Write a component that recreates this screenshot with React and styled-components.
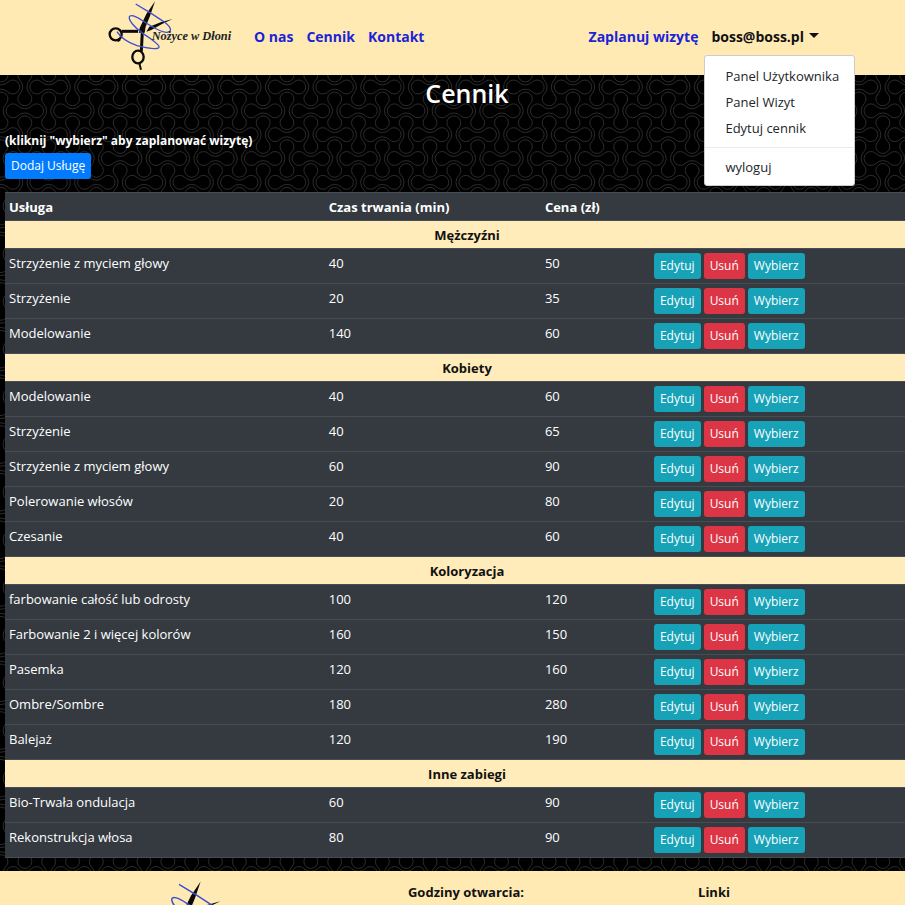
import React from "react";
import styled, { createGlobalStyle } from "styled-components";

const tile = `<svg xmlns='http://www.w3.org/2000/svg' xmlns:xlink='http://www.w3.org/1999/xlink' width='143' height='143' viewBox='0 0 144 144'><defs><path id='b' d='M-7,-5A10 10 0 0 0 7,-5A7 7 0 1 1 7,5A10 10 0 0 0 -7,5A7 7 0 1 1 -7,-5Z' fill='none' stroke='#2b2b2b' stroke-width='1'/></defs>${[0, 1, 2, 3, 4, 5, 6]
  .flatMap((i) =>
    [0, 1, 2, 3, 4, 5, 6].map(
      (j) =>
        `<use xlink:href='#b' transform='translate(${i * 24} ${j * 24})${(i + j) % 2 ? " rotate(90)" : ""}'/>`
    )
  )
  .join("")}</svg>`;
const pattern = `url("data:image/svg+xml,${encodeURIComponent(tile).replace(/'/g, "%27").replace(/\(/g, "%28").replace(/\)/g, "%29")}")`;

const cream = "#ffeab3";

const GlobalStyle = createGlobalStyle`
  * { box-sizing: border-box; }
  body {
    margin: 0;
    background: #000;
    color: #fff;
    font: 13px/20px "Open Sans", "Noto Sans", sans-serif;
  }
`;

const Page = styled.div`
  min-height: 100vh;
`;

const Header = styled.header`
  display: flex;
  align-items: center;
  height: 75px;
  padding: 0 86px 0 108px;
  background: ${cream};
  color: #111;
`;

const Brand = styled.a`
  display: block;
  margin-right: 21px;
  line-height: 0;
`;

const Nav = styled.nav`
  display: flex;
  flex: 1;
  gap: 13px;
  padding-bottom: 2px;
`;

const NavLink = styled.a`
  color: #1a24d8;
  font-size: 14px;
  font-weight: 700;
  text-decoration: none;
  white-space: nowrap;
  &:nth-child(4) { margin-left: auto; }
`;

const Dropdown = styled.div`
  position: relative;
`;

const Toggle = styled.button`
  display: flex;
  align-items: center;
  gap: 5px;
  padding: 0;
  border: 0;
  background: none;
  color: #111;
  font: inherit;
  font-size: 14px;
  font-weight: 700;
  &::after {
    content: "";
    margin-bottom: 2px;
    border: 5px solid transparent;
    border-top-color: #111;
    border-bottom: 0;
  }
`;

const Menu = styled.div`
  position: absolute;
  z-index: 2;
  top: 28px;
  left: -7px;
  width: 151px;
  padding: 7px 0 5px;
  border: 1px solid #ccc;
  border-radius: 3px;
  background: #fff;
`;

const MenuItem = styled.a`
  display: block;
  padding: 3px 20px;
  color: #212529;
  font-weight: 400;
  text-decoration: none;
  white-space: nowrap;
`;

const Divider = styled.hr`
  height: 1px;
  margin: 6px 0;
  border: 0;
  background: #e9ecef;
`;

const Main = styled.main`
  padding: 0 0 13px 5px;
  overflow: hidden;
  background: #000 ${pattern} 1px 12px;
`;

const Content = styled.div`
  margin-right: -24px;
`;

const Title = styled.h1`
  margin: 0 0 20px;
  font-size: 25px;
  font-weight: 600;
  line-height: 36px;
  text-align: center;
`;

const Hint = styled.p`
  margin: 0 0 2px;
  font-size: 12px;
  font-weight: 700;
`;

const tones = { primary: "#007bff", info: "#17a2b8", danger: "#dc3545" };

const Button = styled.button`
  height: 26px;
  padding: 0 6px;
  border: 0;
  border-radius: 3px;
  background: ${(p) => tones[p.$tone]};
  color: #fff;
  font: inherit;
  font-size: 12px;
  white-space: nowrap;
`;

const Table = styled.table`
  width: 100%;
  margin-top: 13px;
  border-collapse: separate;
  border-spacing: 0;
  table-layout: fixed;
  background: #343a40;
`;

const Col = styled.col`
  width: ${(p) => p.$width};
`;

const HeadCell = styled.th`
  height: 29px;
  padding: 4px 4px 3px;
  border-top: 1px solid #454d55;
  border-bottom: 1px solid #454d55;
  text-align: left;
`;

const GroupCell = styled.th`
  height: 28px;
  padding: 4px 4px 3px;
  border-bottom: 1px solid #454d55;
  background: #ffecba;
  color: #111;
  text-align: center;
`;

const Cell = styled.td`
  height: 35px;
  padding: 4px;
  border-bottom: 1px solid #454d55;
  vertical-align: top;
`;

const Actions = styled.div`
  display: flex;
  gap: 3px;
`;

const Footer = styled.footer`
  display: grid;
  grid-template-columns: repeat(3, 1fr);
  padding: 9px 67px 9px 94px;
  background: ${cream};
  color: #111;
  text-align: center;
`;

const FooterTitle = styled.h2`
  margin: 2px 0;
  font-size: 13px;
  font-weight: 700;
  line-height: 20px;
`;

const Logo = ({ width, height }) => (
  <svg width={width} height={height} viewBox="24 0 375 225" role="img" aria-label="Nożyce w Dłoni">
    <g fill="none" stroke="#0b0b08">
      <ellipse cx="47" cy="103" rx="18" ry="18" strokeWidth="7" />
      <ellipse cx="114" cy="171" rx="17" ry="19" strokeWidth="7" />
      <path d="M65 94H114" strokeWidth="9" />
      <path d="M127 94L124 154" strokeWidth="9" />
      <path d="M118 190L123 209" strokeWidth="6" />
      <path d="M52 123L60 119" strokeWidth="7" />
    </g>
    <path d="M165 4L139 42L119 84L116 98L134 98L137 80L150 48Z" fill="#0b0b08" />
    <path d="M218 57L182 67L148 80L139 95L154 90L186 72Z" fill="#0b0b08" />
    <path
      d="M107 12L150 38L190 64C216 83 217 95 201 97C184 98 158 82 129 63C104 47 91 43 88 50C85 62 106 84 128 100C153 116 180 134 177 142C173 149 142 145 111 137C82 127 63 115 51 95"
      fill="none"
      stroke="#3f4fd0"
      strokeWidth="4"
    />
    <text x="155" y="119" fontFamily="Liberation Serif, serif" fontSize="37" fontStyle="italic" fontWeight="700" fill="#222">
      Nożyce w Dłoni
    </text>
  </svg>
);

const groups = [
  ["Mężczyźni", [["Strzyżenie z myciem głowy", 40, 50], ["Strzyżenie", 20, 35], ["Modelowanie", 140, 60]]],
  ["Kobiety", [["Modelowanie", 40, 60], ["Strzyżenie", 40, 65], ["Strzyżenie z myciem głowy", 60, 90], ["Polerowanie włosów", 20, 80], ["Czesanie", 40, 60]]],
  ["Koloryzacja", [["farbowanie całość lub odrosty", 100, 120], ["Farbowanie 2 i więcej kolorów", 160, 150], ["Pasemka", 120, 160], ["Ombre/Sombre", 180, 280], ["Balejaż", 120, 190]]],
  ["Inne zabiegi", [["Bio-Trwała ondulacja", 60, 90], ["Rekonstrukcja włosa", 80, 90]]],
];

export default function App() {
  return (
    <Page>
      <GlobalStyle />
      <Header>
        <Brand href="#"><Logo width={125} height={75} /></Brand>
        <Nav>
          <NavLink href="#o-nas">O nas</NavLink>
          <NavLink href="#cennik">Cennik</NavLink>
          <NavLink href="#kontakt">Kontakt</NavLink>
          <NavLink href="#wizyta">Zaplanuj wizytę</NavLink>
          <Dropdown>
            <Toggle type="button" aria-expanded="true">boss@boss.pl</Toggle>
            <Menu>
              <MenuItem href="#panel">Panel Użytkownika</MenuItem>
              <MenuItem href="#wizyty">Panel Wizyt</MenuItem>
              <MenuItem href="#edytuj">Edytuj cennik</MenuItem>
              <Divider />
              <MenuItem href="#wyloguj">wyloguj</MenuItem>
            </Menu>
          </Dropdown>
        </Nav>
      </Header>
      <Main>
        <Content>
          <Title>Cennik</Title>
          <Hint>(kliknij "wybierz" aby zaplanować wizytę)</Hint>
          <Button type="button" $tone="primary">Dodaj Usługę</Button>
          <Table>
            <colgroup>
              <Col $width="34.6%" />
              <Col $width="23.4%" />
              <Col $width="11.8%" />
              <Col />
            </colgroup>
            <thead>
              <tr>
                <HeadCell scope="col">Usługa</HeadCell>
                <HeadCell scope="col">Czas trwania (min)</HeadCell>
                <HeadCell scope="col" colSpan={2}>Cena (zł)</HeadCell>
              </tr>
            </thead>
            {groups.map(([name, rows]) => (
              <tbody key={name}>
                <tr>
                  <GroupCell colSpan={4} scope="rowgroup">{name}</GroupCell>
                </tr>
                {rows.map(([service, time, price]) => (
                  <tr key={service}>
                    <Cell>{service}</Cell>
                    <Cell>{time}</Cell>
                    <Cell>{price}</Cell>
                    <Cell>
                      <Actions>
                        <Button type="button" $tone="info">Edytuj</Button>
                        <Button type="button" $tone="danger">Usuń</Button>
                        <Button type="button" $tone="info">Wybierz</Button>
                      </Actions>
                    </Cell>
                  </tr>
                ))}
              </tbody>
            ))}
          </Table>
        </Content>
      </Main>
      <Footer>
        <div><Logo width={140} height={84} /></div>
        <FooterTitle>Godziny otwarcia:</FooterTitle>
        <FooterTitle>Linki</FooterTitle>
      </Footer>
    </Page>
  );
}
